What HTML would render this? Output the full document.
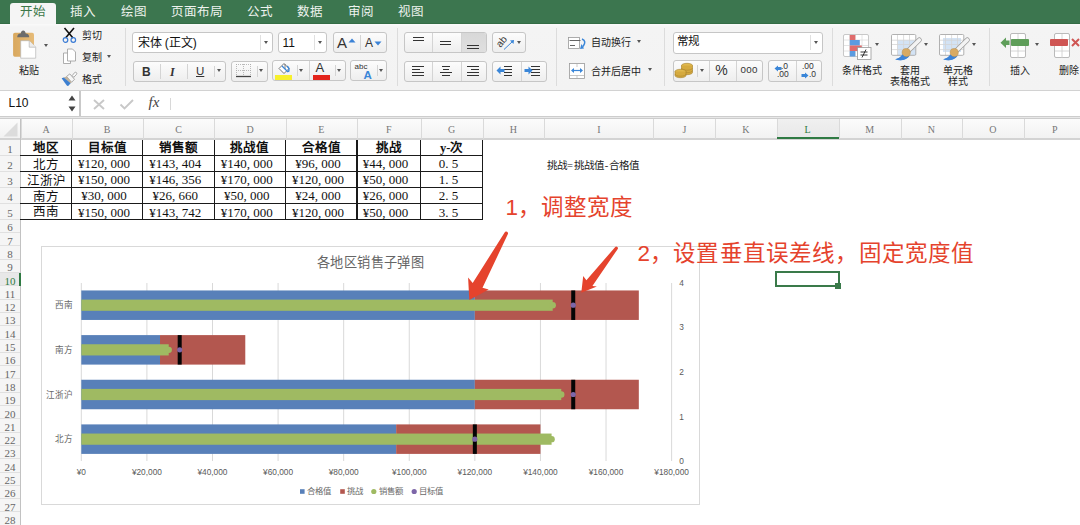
<!DOCTYPE html>
<html lang="zh-CN"><head><meta charset="utf-8">
<style>
*{margin:0;padding:0;box-sizing:border-box}
html,body{width:1080px;height:525px;overflow:hidden;background:#fff;font-family:"Liberation Sans",sans-serif;position:relative}
div,span{position:absolute}
.tab{top:4.5px;font-size:12.5px;line-height:14px;color:#e9efe9;white-space:nowrap;font-weight:500}
.t10{font-size:10px;line-height:11px;color:#222;white-space:nowrap;font-weight:500}
.sep{width:1px;background:#dcdcdc}
.box{border:1px solid #c6c6c6;border-radius:3px;background:linear-gradient(#fcfcfc,#eeeeee)}
.wbox{border:1px solid #c6c6c6;border-radius:3px;background:#fff}
.dv{top:2px;bottom:2px;width:1px;background:#d4d4d4}
.arr{width:0;height:0;border-left:2.6px solid transparent;border-right:2.6px solid transparent;border-top:3.6px solid #5a5a5a}
.ch{top:0;height:19px;font-family:"Liberation Serif",serif;font-size:10px;line-height:19px;text-align:center;color:#666}
.rh{left:0;width:20px;font-family:"Liberation Serif",serif;font-size:11px;text-align:center;color:#666}
.cell{font-family:"Liberation Serif",serif;font-size:13px;text-align:center;color:#111;white-space:nowrap}
.ax{font-size:8px;color:#595959;white-space:nowrap;line-height:9px}
svg{position:absolute}
.ls{position:static;letter-spacing:3.25px}
</style></head><body>
<div style="left:0;top:0;width:1080px;height:24px;background:#3c764f;border-bottom:1px solid #346c45"></div>
<div style="left:9.5px;top:3px;width:46.5px;height:21px;background:#f5f5f5;border-radius:3px 3px 0 0"></div>
<div class="tab" style="left:20px;color:#3b7749">开始</div>
<div class="tab" style="left:70px;color:#eef3ee">插入</div>
<div class="tab" style="left:121px;color:#eef3ee">绘图</div>
<div class="tab" style="left:171px;color:#eef3ee">页面布局</div>
<div class="tab" style="left:247px;color:#eef3ee">公式</div>
<div class="tab" style="left:297px;color:#eef3ee">数据</div>
<div class="tab" style="left:348px;color:#eef3ee">审阅</div>
<div class="tab" style="left:398px;color:#eef3ee">视图</div>
<div style="left:0;top:23.5px;width:1080px;height:67.5px;background:linear-gradient(#fafafa,#f4f4f4 3px,#f3f3f3);border-bottom:1px solid #d2d2d2"></div>
<div class="sep" style="left:125px;top:28px;height:58px"></div>
<div class="sep" style="left:396.5px;top:28px;height:58px"></div>
<div class="sep" style="left:555.6px;top:28px;height:58px"></div>
<div class="sep" style="left:664.4px;top:28px;height:58px"></div>
<div class="sep" style="left:831.5px;top:28px;height:58px"></div>
<div class="sep" style="left:989.3px;top:28px;height:58px"></div>
<svg style="left:10px;top:28px" width="30" height="34" viewBox="0 0 30 34">
<defs><linearGradient id="cbg" x1="0" y1="0" x2="1" y2="0"><stop offset="0" stop-color="#d9a85e"/><stop offset="1" stop-color="#e6bb78"/></linearGradient></defs>
<rect x="3.1" y="4.8" width="20.9" height="24" rx="1.8" fill="url(#cbg)"/>
<path d="M7.2 9.3 q0 -3.5 3.5 -3.8 q0.5 -3 2.5 -3 q2 0 2.5 3 q3.5 0.3 3.5 3.8z" fill="#6c6c6c"/>
<path d="M10.7 12.7 h8.5 l6.5 6.5 v11 h-15z" fill="#fff" stroke="#b5b5b5" stroke-width="0.7"/>
<path d="M19.2 12.7 v6.5 h6.5" fill="#ececec" stroke="#b5b5b5" stroke-width="0.7"/>
</svg>
<div class="arr" style="left:44.4px;top:43.6px;border-top-color:#555"></div>
<div class="t10" style="left:19px;top:64.5px">粘贴</div>
<svg style="left:62px;top:27px" width="15" height="17" viewBox="0 0 15 17">
<path d="M2.5 1 L11 11 M12 1 L3.5 11" stroke="#111" stroke-width="1.6"/>
<circle cx="3.5" cy="13" r="2.3" fill="none" stroke="#3a7bd5" stroke-width="1.2"/>
<circle cx="11.3" cy="13" r="2.3" fill="none" stroke="#3a7bd5" stroke-width="1.2"/>
</svg>
<div class="t10" style="left:82px;top:30px">剪切</div>
<svg style="left:62px;top:48px" width="15" height="17" viewBox="0 0 15 17">
<path d="M1.5 5 h5 l2 2 v8.5 h-7z" fill="#fff" stroke="#9a9a9a" stroke-width="0.8"/>
<path d="M5.5 1 h5 l3 3 v9 h-8z" fill="#fff" stroke="#9a9a9a" stroke-width="0.8"/>
</svg>
<div class="t10" style="left:82px;top:51.5px">复制</div>
<div class="arr" style="left:107.4px;top:55.0px;border-top-color:#555"></div>
<svg style="left:58px;top:68px" width="22" height="20" viewBox="0 0 22 20">
<path d="M14.2 7.6 L16.6 4.6 Q17.6 3.8 18.5 4.7 Q19.2 5.6 18.4 6.5 L15.8 9.3z" fill="#fafafa" stroke="#8a8a8a" stroke-width="0.7"/>
<path d="M8.6 8.4 L11.8 5.9 L16.5 11.3 L13.6 14.3z" fill="#f6f6f6" stroke="#8a8a8a" stroke-width="0.7"/>
<path d="M5.6 9.6 L8.6 8.4 L13.6 14.3 L12.3 15.5z" fill="#c2b39c"/>
<path d="M3.6 10.3 L5.8 9.5 L12.6 15.3 L10.4 17.8 Q9.6 18.4 8.8 17.6z" fill="#3d7fd0"/>
</svg>
<div class="t10" style="left:82px;top:73.5px">格式</div>
<div class="wbox" style="left:132.4px;top:31.7px;width:140.7px;height:21.4px"></div>
<div style="left:259.8px;top:35px;width:1px;height:15px;background:#e0e0e0"></div>
<div class="arr" style="left:263.9px;top:40.7px;border-top-color:#555"></div>
<div style="left:137.5px;top:35.5px;font-size:12px;line-height:14px;color:#111;white-space:nowrap">宋体 (正文)</div>
<div class="wbox" style="left:277.6px;top:31.7px;width:49.8px;height:21.4px"></div>
<div style="left:314.4px;top:35px;width:1px;height:15px;background:#e0e0e0"></div>
<div class="arr" style="left:318.4px;top:40.7px;border-top-color:#555"></div>
<div style="left:282.5px;top:35.5px;font-size:12px;line-height:14px;color:#111">11</div>
<div class="box" style="left:332.6px;top:31.7px;width:54.4px;height:21.4px"><div class="dv" style="left:26.2px"></div></div>
<div style="left:337px;top:33.5px;font-size:15px;line-height:17px;color:#333">A</div>
<svg style="left:348px;top:38px" width="8" height="5"><path d="M0.5 4.5 L4 0.5 L7.5 4.5z" fill="#3b82d6"/></svg>
<div style="left:365px;top:36px;font-size:12px;line-height:14px;color:#333">A</div>
<svg style="left:374px;top:41px" width="8" height="5"><path d="M0.5 0.5 L4 4.5 L7.5 0.5z" fill="#3b82d6"/></svg>
<div class="box" style="left:133.1px;top:60.6px;width:92.6px;height:21.4px"><div class="dv" style="left:26.4px"></div><div class="dv" style="left:53.4px"></div><div class="dv" style="left:80.2px;top:4px;bottom:4px"></div></div>
<div style="left:142px;top:64.5px;font-size:12px;line-height:14px;font-weight:bold;color:#333">B</div>
<div style="left:170px;top:64.5px;font-size:12px;line-height:14px;font-style:italic;font-family:'Liberation Serif',serif;font-weight:bold;color:#333">I</div>
<div style="left:196px;top:64px;font-size:11.5px;line-height:14px;color:#333;text-decoration:underline">U</div>
<div class="arr" style="left:217.4px;top:69.0px;border-top-color:#555"></div>
<div class="box" style="left:230.5px;top:60.6px;width:37px;height:21.4px"><div class="dv" style="left:25.1px;top:4px;bottom:4px"></div></div>
<svg style="left:235px;top:63px" width="18" height="16" viewBox="0 0 18 16">
<path d="M1 1.5 h15 M1 7.5 h15 M1.5 1 v11 M8.5 1 v11 M15.5 1 v11" stroke="#aaa" stroke-width="0.8" stroke-dasharray="1 1"/>
<path d="M1 13.5 h15" stroke="#444" stroke-width="1.3"/></svg>
<div class="arr" style="left:259.4px;top:69.0px;border-top-color:#555"></div>
<div class="box" style="left:272.4px;top:60.4px;width:73.3px;height:21.1px"><div class="dv" style="left:23.5px;top:4px;bottom:4px"></div><div class="dv" style="left:35.2px;top:0;bottom:0"></div><div class="dv" style="left:62.1px;top:4px;bottom:4px"></div></div>
<svg style="left:276px;top:62px" width="16" height="13" viewBox="0 0 16 13">
<path d="M3 6.5 l5 -5 l5 5 l-5 5z" fill="#fff" stroke="#666" stroke-width="0.9"/>
<path d="M9 2 v5" stroke="#666" stroke-width="0.8"/><path d="M11 4 q3 2 1.5 6" stroke="#3a86d8" stroke-width="1.4" fill="none"/>
<path d="M6 4 l6 6" stroke="#3a86d8" stroke-width="1.2"/></svg>
<div style="left:274.8px;top:75.2px;width:17.1px;height:4.5px;background:#f7f02c"></div>
<div class="arr" style="left:299.4px;top:68.6px;border-top-color:#555"></div>
<div style="left:315.5px;top:61px;font-size:13px;line-height:14px;color:#333">A</div>
<div style="left:312.8px;top:75.2px;width:17.1px;height:4.5px;background:#e3241b"></div>
<div class="arr" style="left:337.0px;top:68.6px;border-top-color:#555"></div>
<div class="box" style="left:350.1px;top:60.4px;width:37px;height:21.1px"><div class="dv" style="left:25.9px;top:4px;bottom:4px"></div></div>
<div style="left:354.5px;top:62px;font-size:8px;line-height:9px;color:#333">abc</div>
<div style="left:363.5px;top:69px;font-size:11.5px;line-height:12px;font-weight:bold;color:#3a86d8">A</div>
<div class="arr" style="left:378.8px;top:68.6px;border-top-color:#555"></div>
<div class="box" style="left:404.4px;top:31.7px;width:82.3px;height:21.4px;overflow:hidden"><div style="left:55.2px;top:0;width:27px;height:21px;background:linear-gradient(#d8d8d8,#e0e0e0)"></div><div class="dv" style="left:27px;top:0;bottom:0"></div><div class="dv" style="left:55.2px;top:0;bottom:0"></div></div>
<div style="left:412.6px;top:37px;width:11px;height:1px;background:#333"></div>
<div style="left:412.6px;top:40px;width:11px;height:1px;background:#333"></div>
<div style="left:440px;top:41px;width:11px;height:1px;background:#333"></div>
<div style="left:440px;top:44px;width:11px;height:1px;background:#333"></div>
<div style="left:467.4px;top:45px;width:11.4px;height:1px;background:#333"></div>
<div style="left:467.4px;top:48px;width:11.4px;height:1px;background:#333"></div>
<div class="box" style="left:491.6px;top:31.7px;width:34px;height:21.4px"></div>
<svg style="left:495px;top:33px" width="22" height="19" viewBox="0 0 22 19">
<text x="0" y="0" font-size="10" font-family="Liberation Sans" fill="#333" transform="translate(5.5 15) rotate(-50)">ab</text>
<path d="M9 16.5 L17.5 8.5" stroke="#3a86d8" stroke-width="1"/><path d="M15 7.5 L19 7 L18.5 11z" fill="#3a86d8"/></svg>
<div class="arr" style="left:517.4px;top:40.7px;border-top-color:#555"></div>
<div class="box" style="left:404.4px;top:60.6px;width:82.3px;height:21.1px"><div class="dv" style="left:27px;top:0;bottom:0"></div><div class="dv" style="left:55.2px;top:0;bottom:0"></div></div>
<div style="left:412.2px;top:66px;width:11.5px;height:1px;background:#333"></div>
<div style="left:412.2px;top:69px;width:8px;height:1px;background:#333"></div>
<div style="left:412.2px;top:72px;width:11.5px;height:1px;background:#333"></div>
<div style="left:412.2px;top:75px;width:11.5px;height:1px;background:#333"></div>
<div style="left:441.75px;top:66px;width:8px;height:1px;background:#333"></div>
<div style="left:442.75px;top:69px;width:6px;height:1px;background:#333"></div>
<div style="left:440.0px;top:72px;width:11.5px;height:1px;background:#333"></div>
<div style="left:441.75px;top:75px;width:8px;height:1px;background:#333"></div>
<div style="left:467.2px;top:66px;width:11.5px;height:1px;background:#333"></div>
<div style="left:470.7px;top:69px;width:8px;height:1px;background:#333"></div>
<div style="left:467.2px;top:72px;width:11.5px;height:1px;background:#333"></div>
<div style="left:467.2px;top:75px;width:11.5px;height:1px;background:#333"></div>
<div class="box" style="left:491.6px;top:60.6px;width:55.1px;height:21.1px"><div class="dv" style="left:28px;top:0;bottom:0"></div></div>
<div style="left:503.8px;top:66px;width:8.5px;height:1px;background:#333"></div>
<div style="left:503.8px;top:69px;width:8.5px;height:1px;background:#333"></div>
<div style="left:503.8px;top:72px;width:8.5px;height:1px;background:#333"></div>
<div style="left:503.8px;top:75px;width:8.5px;height:1px;background:#333"></div>
<div style="left:531.2px;top:66px;width:8.5px;height:1px;background:#333"></div>
<div style="left:531.2px;top:69px;width:8.5px;height:1px;background:#333"></div>
<div style="left:531.2px;top:72px;width:8.5px;height:1px;background:#333"></div>
<div style="left:531.2px;top:75px;width:8.5px;height:1px;background:#333"></div>
<svg style="left:496px;top:66px" width="9" height="9"><path d="M0.5 4.5 L4.5 0.5 V3 H8.5 V6 H4.5 V8.5z" fill="#3a86d8"/></svg>
<svg style="left:523.5px;top:66px" width="9" height="9"><path d="M8.5 4.5 L4.5 0.5 V3 H0.5 V6 H4.5 V8.5z" fill="#3a86d8"/></svg>
<svg style="left:568px;top:37px" width="20" height="13" viewBox="0 0 20 13">
<rect x="0.5" y="0.5" width="11" height="11" fill="#fff" stroke="#999" stroke-width="0.8"/>
<path d="M1.5 3.5 h11 M2 8.5 h5" stroke="#666" stroke-width="1"/>
<path d="M14 2 q5 2 1 7.5" stroke="#3a86d8" stroke-width="1.5" fill="none"/><path d="M13.5 7 l2.5 4.5 l-4 0.5z" fill="#3a86d8"/></svg>
<div class="t10" style="left:591.2px;top:37px">自动换行</div>
<div class="arr" style="left:637.2px;top:40.4px;border-top-color:#555"></div>
<svg style="left:569px;top:63px" width="16" height="16" viewBox="0 0 16 16">
<rect x="0.5" y="0.5" width="15" height="15" fill="#fff" stroke="#999" stroke-width="0.8"/>
<path d="M8 1 v3 M8 12 v3 M1 12.5 h14" stroke="#bbb" stroke-width="0.8"/>
<path d="M3 7.5 h10" stroke="#3a86d8" stroke-width="1.2"/><path d="M2 7.5 l3 -2.5 v5z M14 7.5 l-3 -2.5 v5z" fill="#3a86d8"/></svg>
<div class="t10" style="left:591px;top:65.5px">合并后居中</div>
<div class="arr" style="left:647.6px;top:68.4px;border-top-color:#555"></div>
<div class="wbox" style="left:672.6px;top:31.6px;width:150.1px;height:22px"></div>
<div style="left:809.5px;top:35px;width:1px;height:15px;background:#e0e0e0"></div>
<div class="arr" style="left:813.5px;top:40.5px;border-top-color:#555"></div>
<div style="left:677.3px;top:35px;font-size:11.5px;line-height:13px;color:#111">常规</div>
<div class="box" style="left:672.9px;top:60.4px;width:89.7px;height:21.6px"><div class="dv" style="left:23.6px;top:4px;bottom:4px"></div><div class="dv" style="left:35.4px;top:0;bottom:0"></div><div class="dv" style="left:62.6px;top:0;bottom:0"></div></div>
<svg style="left:674px;top:62px" width="20" height="17" viewBox="0 0 20 17">
<ellipse cx="13" cy="3.5" rx="5.5" ry="2.2" fill="#e0b94e" stroke="#a57f2a" stroke-width="0.6"/>
<path d="M7.5 3.5 v7 a5.5 2.2 0 0 0 11 0 v-7" fill="#d5aa3f" stroke="#a57f2a" stroke-width="0.6"/>
<path d="M7.5 6 a5.5 2.2 0 0 0 11 0 M7.5 8.5 a5.5 2.2 0 0 0 11 0" fill="none" stroke="#a57f2a" stroke-width="0.5"/>
<ellipse cx="6.5" cy="9.5" rx="5.5" ry="2.2" fill="#e0b94e" stroke="#a57f2a" stroke-width="0.6"/>
<path d="M1 9.5 v4 a5.5 2.2 0 0 0 11 0 v-4" fill="#d5aa3f" stroke="#a57f2a" stroke-width="0.6"/>
<path d="M1 12 a5.5 2.2 0 0 0 11 0" fill="none" stroke="#a57f2a" stroke-width="0.5"/></svg>
<div class="arr" style="left:699.9px;top:69.0px;border-top-color:#555"></div>
<div style="left:715.3px;top:63px;font-size:14px;line-height:15px;color:#333">%</div>
<div style="left:740.5px;top:64px;font-size:9.8px;line-height:11px;letter-spacing:0.3px;color:#333">000</div>
<div class="box" style="left:767.6px;top:60.4px;width:54.8px;height:21.6px"><div class="dv" style="left:27.7px;top:0;bottom:0"></div></div>
<svg style="left:774px;top:65px" width="8" height="7"><path d="M0.5 3.5 L4 0.5 V2 H7.5 V5 H4 V6.5z" fill="#3a86d8"/></svg>
<div style="left:781px;top:62px;font-size:8.5px;line-height:9px;color:#333">.0</div>
<div style="left:777px;top:70px;font-size:8.5px;line-height:9px;color:#333">.00</div>
<div style="left:802px;top:62px;font-size:8.5px;line-height:9px;color:#333">.00</div>
<svg style="left:801px;top:72px" width="8" height="7"><path d="M7.5 3.5 L4 0.5 V2 H0.5 V5 H4 V6.5z" fill="#3a86d8"/></svg>
<div style="left:809px;top:70px;font-size:8.5px;line-height:9px;color:#333">.0</div>
<svg style="left:843px;top:33.5px" width="27" height="24" viewBox="0 0 27 24">
<rect x="0.5" y="0.5" width="25" height="22" rx="1.5" fill="#fff" stroke="#bbb" stroke-width="0.8"/>
<path d="M6.5 1 v21 M12.5 1 v21 M19 1 v21 M1 6 h24 M1 11.5 h24 M1 17 h24" stroke="#ddd" stroke-width="0.8"/><rect x="6.8" y="1" width="5.5" height="5" fill="#e06c6c"/><rect x="6.8" y="6" width="10" height="5.5" fill="#5b9be0"/>
<rect x="6.8" y="11.5" width="12" height="5.5" fill="#e06c6c"/><rect x="6.8" y="17" width="5.5" height="5.5" fill="#5b9be0"/></svg>
<svg style="left:857px;top:47px" width="15" height="13"><rect x="0.5" y="0.5" width="13.5" height="12" fill="#fff" stroke="#999" stroke-width="0.8"/><path d="M3.5 5 h7 M3.5 8 h7 M9 2.5 L5 10.5" stroke="#222" stroke-width="0.9"/></svg>
<div class="arr" style="left:875.2px;top:43.3px;border-top-color:#555"></div>
<div class="t10" style="left:841.5px;top:65px">条件格式</div>
<svg style="left:891.2px;top:34.2px" width="34" height="28" viewBox="0 0 34 28">
<rect x="0.5" y="0.5" width="24.3" height="20.8" fill="#fff"/><rect x="6.5" y="6.2" width="18.3" height="15.1" fill="#d3e3f5"/>
<path d="M6.5 1 v20.3 M12.6 1 v20.3 M18.5 1 v20.3 M1 6.2 h23.8 M1 10.5 h23.8 M1 15.6 h23.8" stroke="#d4d4d4" stroke-width="0.8" fill="none"/>
<rect x="0.5" y="0.5" width="24.3" height="20.8" rx="1.2" fill="none" stroke="#a8a8a8" stroke-width="0.9"/>
<path d="M28.3 6 L17.8 16.3" stroke="#9a9a9a" stroke-width="5" stroke-linecap="round"/>
<path d="M28.3 6 L17.8 16.3" stroke="#f3f3f3" stroke-width="3.6" stroke-linecap="round"/>
<path d="M11.5 20.5 Q9.5 24 4.2 25.3 Q12.5 28.2 18.4 22.2z" fill="#3d84d8"/><circle cx="15.2" cy="18.6" r="4.1" fill="#d8aa62" stroke="#b48d4c" stroke-width="0.5"/>
<path d="M11.5 20.5 Q9.5 24 4.2 25.3 Q12.5 28.2 18.4 22.2 Q14 24.5 11.5 20.5z" fill="#3d84d8"/>
</svg>
<div class="arr" style="left:923.5px;top:43.3px;border-top-color:#555"></div>
<div class="t10" style="left:899.8px;top:65px">套用</div>
<div class="t10" style="left:890.2px;top:76.2px">表格格式</div>
<svg style="left:939.4px;top:34.2px" width="34" height="28" viewBox="0 0 34 28">
<rect x="0.5" y="0.5" width="24.3" height="20.8" fill="#fff"/><rect x="4" y="4" width="18" height="14" fill="#d3e3f5"/>
<path d="M6.5 1 v20.3 M12.6 1 v20.3 M18.5 1 v20.3 M1 6.2 h23.8 M1 10.5 h23.8 M1 15.6 h23.8" stroke="#d4d4d4" stroke-width="0.8" fill="none"/>
<rect x="0.5" y="0.5" width="24.3" height="20.8" rx="1.2" fill="none" stroke="#a8a8a8" stroke-width="0.9"/>
<path d="M28.3 6 L17.8 16.3" stroke="#9a9a9a" stroke-width="5" stroke-linecap="round"/>
<path d="M28.3 6 L17.8 16.3" stroke="#f3f3f3" stroke-width="3.6" stroke-linecap="round"/>
<path d="M11.5 20.5 Q9.5 24 4.2 25.3 Q12.5 28.2 18.4 22.2z" fill="#3d84d8"/><circle cx="15.2" cy="18.6" r="4.1" fill="#d8aa62" stroke="#b48d4c" stroke-width="0.5"/>
<path d="M11.5 20.5 Q9.5 24 4.2 25.3 Q12.5 28.2 18.4 22.2 Q14 24.5 11.5 20.5z" fill="#3d84d8"/>
</svg>
<div class="arr" style="left:971.6px;top:43.3px;border-top-color:#555"></div>
<div class="t10" style="left:943px;top:65px">单元格</div>
<div class="t10" style="left:948.3px;top:76.2px">样式</div>
<svg style="left:1009.5px;top:33px" width="17" height="26" viewBox="0 0 17 26">
<rect x="0.5" y="0.5" width="15" height="24" rx="1.5" fill="#fff" stroke="#aaa" stroke-width="0.8"/>
<path d="M8 1 v24 M1 6.5 h14 M1 18 h14" stroke="#ccc" stroke-width="0.8"/></svg>
<div style="left:1011px;top:39.3px;width:18px;height:6.7px;background:#5f9e5a;border-radius:1px"></div>
<svg style="left:999.5px;top:37px" width="10" height="12"><path d="M0.5 5.8 L6 0.5 V3.5 H9.5 V8 H6 V11z" fill="#5f9e5a"/></svg>
<div class="arr" style="left:1034.7px;top:42.8px;border-top-color:#555"></div>
<div class="t10" style="left:1009.8px;top:65px">插入</div>
<svg style="left:1053.8px;top:33px" width="17" height="26" viewBox="0 0 17 26">
<rect x="0.5" y="0.5" width="15" height="24" rx="1.5" fill="#fff" stroke="#aaa" stroke-width="0.8"/>
<path d="M8 1 v24 M1 6.5 h14 M1 18 h14" stroke="#ccc" stroke-width="0.8"/></svg>
<div style="left:1050px;top:39.3px;width:18.3px;height:6.7px;background:#cf5654;border-radius:1px"></div>
<svg style="left:1070.5px;top:38px" width="9" height="9"><path d="M1 1 L8 8 M8 1 L1 8" stroke="#cf5654" stroke-width="2"/></svg>
<div class="t10" style="left:1059px;top:65px">删除</div>
<div style="left:0;top:91px;width:1080px;height:26px;background:#fff"></div>
<div style="left:79px;top:91px;width:1.5px;height:25px;background:#c9c9c9"></div>
<div style="left:8.5px;top:96px;font-size:12px;line-height:14px;color:#111">L10</div>
<svg style="left:68px;top:94px" width="8" height="19"><path d="M0.5 6.5 L4 1.5 L7.5 6.5z M0.5 12.5 L4 17.5 L7.5 12.5z" fill="#444"/></svg>
<svg style="left:93px;top:99px" width="12" height="11"><path d="M1 1 L11 10 M11 1 L1 10" stroke="#c8c8c8" stroke-width="1.9"/></svg>
<svg style="left:119px;top:99px" width="15" height="11"><path d="M1.5 5.5 L5.5 9.5 L14 1" stroke="#c8c8c8" stroke-width="1.9" fill="none"/></svg>
<div style="left:148.5px;top:94px;font-family:'Liberation Serif',serif;font-style:italic;font-size:15px;line-height:17px;color:#444">fx</div>
<div style="left:170px;top:97.5px;width:1px;height:12px;background:#d8d8d8"></div>
<div style="left:0;top:116px;width:1080px;height:3px;background:#e8e8e8;border-top:1px solid #cdcdcd;border-bottom:1px solid #cdcdcd"></div>
<div style="left:0;top:118.7px;width:1080px;height:21px;background:linear-gradient(#fbfbfb,#f2f2f2);border-bottom:2px solid #d3d3d3"></div>
<svg style="left:3px;top:122px" width="15" height="15"><path d="M14.5 0.5 V14.5 H0.5z" fill="#dcdcdc"/></svg>
<div style="left:776.5px;top:118.7px;width:62.3px;height:19px;background:linear-gradient(#f0f0f0,#e8e8e8)"></div>
<div style="left:20.7px;top:119px;width:1px;height:20px;background:#dadada"></div>
<div class="ch" style="left:20.7px;top:119.5px;width:51.0px;color:#777">A</div>
<div style="left:71.7px;top:119px;width:1px;height:20px;background:#dadada"></div>
<div class="ch" style="left:71.7px;top:119.5px;width:71.0px;color:#777">B</div>
<div style="left:142.7px;top:119px;width:1px;height:20px;background:#dadada"></div>
<div class="ch" style="left:142.7px;top:119.5px;width:71.6px;color:#777">C</div>
<div style="left:214.3px;top:119px;width:1px;height:20px;background:#dadada"></div>
<div class="ch" style="left:214.3px;top:119.5px;width:71.4px;color:#777">D</div>
<div style="left:285.7px;top:119px;width:1px;height:20px;background:#dadada"></div>
<div class="ch" style="left:285.7px;top:119.5px;width:71.3px;color:#777">E</div>
<div style="left:357.0px;top:119px;width:1px;height:20px;background:#dadada"></div>
<div class="ch" style="left:357.0px;top:119.5px;width:63.7px;color:#777">F</div>
<div style="left:420.7px;top:119px;width:1px;height:20px;background:#dadada"></div>
<div class="ch" style="left:420.7px;top:119.5px;width:62.0px;color:#777">G</div>
<div style="left:482.7px;top:119px;width:1px;height:20px;background:#dadada"></div>
<div class="ch" style="left:482.7px;top:119.5px;width:61.6px;color:#777">H</div>
<div style="left:544.3px;top:119px;width:1px;height:20px;background:#dadada"></div>
<div class="ch" style="left:544.3px;top:119.5px;width:109.0px;color:#777">I</div>
<div style="left:653.3px;top:119px;width:1px;height:20px;background:#dadada"></div>
<div class="ch" style="left:653.3px;top:119.5px;width:62.1px;color:#777">J</div>
<div style="left:715.4px;top:119px;width:1px;height:20px;background:#dadada"></div>
<div class="ch" style="left:715.4px;top:119.5px;width:61.1px;color:#777">K</div>
<div style="left:776.5px;top:119px;width:1px;height:20px;background:#dadada"></div>
<div class="ch" style="left:776.5px;top:119.5px;width:62.3px;color:#2f7a43">L</div>
<div style="left:838.8px;top:119px;width:1px;height:20px;background:#dadada"></div>
<div class="ch" style="left:838.8px;top:119.5px;width:61.9px;color:#777">M</div>
<div style="left:900.7px;top:119px;width:1px;height:20px;background:#dadada"></div>
<div class="ch" style="left:900.7px;top:119.5px;width:61.3px;color:#777">N</div>
<div style="left:962.0px;top:119px;width:1px;height:20px;background:#dadada"></div>
<div class="ch" style="left:962.0px;top:119.5px;width:61.8px;color:#777">O</div>
<div style="left:1023.8px;top:119px;width:1px;height:20px;background:#dadada"></div>
<div class="ch" style="left:1023.8px;top:119.5px;width:61.8px;color:#777">P</div>
<div style="left:776.5px;top:137px;width:62.3px;height:2px;background:#2f7a43"></div>
<div style="left:0;top:139.7px;width:20.1px;height:386px;background:#f5f5f5"></div>
<div style="left:20.1px;top:118.7px;width:1px;height:407px;background:#c2c2c2"></div>
<div class="rh" style="top:141.6px;height:15.7px;line-height:15.7px;color:#666">1</div>
<div style="left:0;top:154.8px;width:20px;height:1px;background:#e0e0e0"></div>
<div class="rh" style="top:157.3px;height:16.1px;line-height:16.1px;color:#666">2</div>
<div style="left:0;top:170.9px;width:20px;height:1px;background:#e0e0e0"></div>
<div class="rh" style="top:173.4px;height:16.0px;line-height:16.0px;color:#666">3</div>
<div style="left:0;top:186.9px;width:20px;height:1px;background:#e0e0e0"></div>
<div class="rh" style="top:189.4px;height:16.2px;line-height:16.2px;color:#666">4</div>
<div style="left:0;top:203.1px;width:20px;height:1px;background:#e0e0e0"></div>
<div class="rh" style="top:205.6px;height:15.7px;line-height:15.7px;color:#666">5</div>
<div style="left:0;top:218.8px;width:20px;height:1px;background:#e0e0e0"></div>
<div class="rh" style="top:221.3px;height:13.3px;line-height:13.3px;color:#666">6</div>
<div style="left:0;top:232.1px;width:20px;height:1px;background:#e0e0e0"></div>
<div class="rh" style="top:234.6px;height:13.3px;line-height:13.3px;color:#666">7</div>
<div style="left:0;top:245.4px;width:20px;height:1px;background:#e0e0e0"></div>
<div class="rh" style="top:247.9px;height:13.3px;line-height:13.3px;color:#666">8</div>
<div style="left:0;top:258.7px;width:20px;height:1px;background:#e0e0e0"></div>
<div class="rh" style="top:261.2px;height:13.3px;line-height:13.3px;color:#666">9</div>
<div style="left:0;top:272.0px;width:20px;height:1px;background:#e0e0e0"></div>
<div style="left:0;top:272.5px;width:20.1px;height:13.3px;background:#e8e8e8"></div>
<div class="rh" style="top:274.5px;height:13.3px;line-height:13.3px;color:#2f7a43">10</div>
<div style="left:0;top:285.3px;width:20px;height:1px;background:#e0e0e0"></div>
<div class="rh" style="top:287.8px;height:13.3px;line-height:13.3px;color:#666">11</div>
<div style="left:0;top:298.6px;width:20px;height:1px;background:#e0e0e0"></div>
<div class="rh" style="top:301.1px;height:13.3px;line-height:13.3px;color:#666">12</div>
<div style="left:0;top:311.9px;width:20px;height:1px;background:#e0e0e0"></div>
<div class="rh" style="top:314.4px;height:13.3px;line-height:13.3px;color:#666">13</div>
<div style="left:0;top:325.2px;width:20px;height:1px;background:#e0e0e0"></div>
<div class="rh" style="top:327.7px;height:13.3px;line-height:13.3px;color:#666">14</div>
<div style="left:0;top:338.5px;width:20px;height:1px;background:#e0e0e0"></div>
<div class="rh" style="top:341.0px;height:13.3px;line-height:13.3px;color:#666">15</div>
<div style="left:0;top:351.8px;width:20px;height:1px;background:#e0e0e0"></div>
<div class="rh" style="top:354.3px;height:13.3px;line-height:13.3px;color:#666">16</div>
<div style="left:0;top:365.1px;width:20px;height:1px;background:#e0e0e0"></div>
<div class="rh" style="top:367.6px;height:13.3px;line-height:13.3px;color:#666">17</div>
<div style="left:0;top:378.4px;width:20px;height:1px;background:#e0e0e0"></div>
<div class="rh" style="top:380.9px;height:13.3px;line-height:13.3px;color:#666">18</div>
<div style="left:0;top:391.7px;width:20px;height:1px;background:#e0e0e0"></div>
<div class="rh" style="top:394.2px;height:13.3px;line-height:13.3px;color:#666">19</div>
<div style="left:0;top:405.0px;width:20px;height:1px;background:#e0e0e0"></div>
<div class="rh" style="top:407.5px;height:13.3px;line-height:13.3px;color:#666">20</div>
<div style="left:0;top:418.3px;width:20px;height:1px;background:#e0e0e0"></div>
<div class="rh" style="top:420.8px;height:13.3px;line-height:13.3px;color:#666">21</div>
<div style="left:0;top:431.6px;width:20px;height:1px;background:#e0e0e0"></div>
<div class="rh" style="top:434.1px;height:13.3px;line-height:13.3px;color:#666">22</div>
<div style="left:0;top:444.9px;width:20px;height:1px;background:#e0e0e0"></div>
<div class="rh" style="top:447.4px;height:13.3px;line-height:13.3px;color:#666">23</div>
<div style="left:0;top:458.2px;width:20px;height:1px;background:#e0e0e0"></div>
<div class="rh" style="top:460.7px;height:13.3px;line-height:13.3px;color:#666">24</div>
<div style="left:0;top:471.5px;width:20px;height:1px;background:#e0e0e0"></div>
<div class="rh" style="top:474.0px;height:13.3px;line-height:13.3px;color:#666">25</div>
<div style="left:0;top:484.8px;width:20px;height:1px;background:#e0e0e0"></div>
<div class="rh" style="top:487.3px;height:13.3px;line-height:13.3px;color:#666">26</div>
<div style="left:0;top:498.1px;width:20px;height:1px;background:#e0e0e0"></div>
<div class="rh" style="top:500.6px;height:13.3px;line-height:13.3px;color:#666">27</div>
<div style="left:0;top:511.4px;width:20px;height:1px;background:#e0e0e0"></div>
<div class="rh" style="top:513.9px;height:13.3px;line-height:13.3px;color:#666">28</div>
<div style="left:0;top:524.7px;width:20px;height:1px;background:#e0e0e0"></div>
<div style="left:18.8px;top:272.5px;width:2px;height:13.3px;background:#2f7a43"></div>
<div class="cell" style="left:20.7px;top:141.4px;width:51.0px;height:15.7px;line-height:15.7px;font-weight:bold;font-size:12.5px;">地区</div>
<div class="cell" style="left:71.7px;top:141.4px;width:71.0px;height:15.7px;line-height:15.7px;font-weight:bold;font-size:12.5px;">目标值</div>
<div class="cell" style="left:142.7px;top:141.4px;width:71.6px;height:15.7px;line-height:15.7px;font-weight:bold;font-size:12.5px;">销售额</div>
<div class="cell" style="left:214.3px;top:141.4px;width:71.4px;height:15.7px;line-height:15.7px;font-weight:bold;font-size:12.5px;">挑战值</div>
<div class="cell" style="left:285.7px;top:141.4px;width:71.3px;height:15.7px;line-height:15.7px;font-weight:bold;font-size:12.5px;">合格值</div>
<div class="cell" style="left:357.0px;top:141.4px;width:63.7px;height:15.7px;line-height:15.7px;font-weight:bold;font-size:12.5px;">挑战</div>
<div class="cell" style="left:420.7px;top:141.4px;width:62.0px;height:15.7px;line-height:15.7px;font-weight:bold;font-size:12.5px;">y-次</div>
<div class="cell" style="left:20.7px;top:157.1px;width:51.0px;height:16.1px;line-height:16.1px;font-size:12.5px;">北方</div>
<div class="cell" style="left:71.7px;top:156.3px;width:71.0px;height:16.1px;line-height:16.1px;padding-right:6.5px;">¥120<span class="ls">,</span>000</div>
<div class="cell" style="left:142.7px;top:156.3px;width:71.6px;height:16.1px;line-height:16.1px;padding-right:6.5px;">¥143<span class="ls">,</span>404</div>
<div class="cell" style="left:214.3px;top:156.3px;width:71.4px;height:16.1px;line-height:16.1px;padding-right:6.5px;">¥140<span class="ls">,</span>000</div>
<div class="cell" style="left:285.7px;top:156.3px;width:71.3px;height:16.1px;line-height:16.1px;padding-right:6.5px;">¥96<span class="ls">,</span>000</div>
<div class="cell" style="left:357.0px;top:156.3px;width:63.7px;height:16.1px;line-height:16.1px;padding-right:6.5px;">¥44<span class="ls">,</span>000</div>
<div class="cell" style="left:420.7px;top:156.3px;width:62.0px;height:16.1px;line-height:16.1px;padding-right:6.5px;">0<span class="ls">.</span>5</div>
<div class="cell" style="left:20.7px;top:173.2px;width:51.0px;height:16.0px;line-height:16.0px;font-size:12.5px;">江浙沪</div>
<div class="cell" style="left:71.7px;top:172.4px;width:71.0px;height:16.0px;line-height:16.0px;padding-right:6.5px;">¥150<span class="ls">,</span>000</div>
<div class="cell" style="left:142.7px;top:172.4px;width:71.6px;height:16.0px;line-height:16.0px;padding-right:6.5px;">¥146<span class="ls">,</span>356</div>
<div class="cell" style="left:214.3px;top:172.4px;width:71.4px;height:16.0px;line-height:16.0px;padding-right:6.5px;">¥170<span class="ls">,</span>000</div>
<div class="cell" style="left:285.7px;top:172.4px;width:71.3px;height:16.0px;line-height:16.0px;padding-right:6.5px;">¥120<span class="ls">,</span>000</div>
<div class="cell" style="left:357.0px;top:172.4px;width:63.7px;height:16.0px;line-height:16.0px;padding-right:6.5px;">¥50<span class="ls">,</span>000</div>
<div class="cell" style="left:420.7px;top:172.4px;width:62.0px;height:16.0px;line-height:16.0px;padding-right:6.5px;">1<span class="ls">.</span>5</div>
<div class="cell" style="left:20.7px;top:189.2px;width:51.0px;height:16.2px;line-height:16.2px;font-size:12.5px;">南方</div>
<div class="cell" style="left:71.7px;top:188.4px;width:71.0px;height:16.2px;line-height:16.2px;padding-right:6.5px;">¥30<span class="ls">,</span>000</div>
<div class="cell" style="left:142.7px;top:188.4px;width:71.6px;height:16.2px;line-height:16.2px;padding-right:6.5px;">¥26<span class="ls">,</span>660</div>
<div class="cell" style="left:214.3px;top:188.4px;width:71.4px;height:16.2px;line-height:16.2px;padding-right:6.5px;">¥50<span class="ls">,</span>000</div>
<div class="cell" style="left:285.7px;top:188.4px;width:71.3px;height:16.2px;line-height:16.2px;padding-right:6.5px;">¥24<span class="ls">,</span>000</div>
<div class="cell" style="left:357.0px;top:188.4px;width:63.7px;height:16.2px;line-height:16.2px;padding-right:6.5px;">¥26<span class="ls">,</span>000</div>
<div class="cell" style="left:420.7px;top:188.4px;width:62.0px;height:16.2px;line-height:16.2px;padding-right:6.5px;">2<span class="ls">.</span>5</div>
<div class="cell" style="left:20.7px;top:205.4px;width:51.0px;height:15.7px;line-height:15.7px;font-size:12.5px;">西南</div>
<div class="cell" style="left:71.7px;top:204.6px;width:71.0px;height:15.7px;line-height:15.7px;padding-right:6.5px;">¥150<span class="ls">,</span>000</div>
<div class="cell" style="left:142.7px;top:204.6px;width:71.6px;height:15.7px;line-height:15.7px;padding-right:6.5px;">¥143<span class="ls">,</span>742</div>
<div class="cell" style="left:214.3px;top:204.6px;width:71.4px;height:15.7px;line-height:15.7px;padding-right:6.5px;">¥170<span class="ls">,</span>000</div>
<div class="cell" style="left:285.7px;top:204.6px;width:71.3px;height:15.7px;line-height:15.7px;padding-right:6.5px;">¥120<span class="ls">,</span>000</div>
<div class="cell" style="left:357.0px;top:204.6px;width:63.7px;height:15.7px;line-height:15.7px;padding-right:6.5px;">¥50<span class="ls">,</span>000</div>
<div class="cell" style="left:420.7px;top:204.6px;width:62.0px;height:15.7px;line-height:15.7px;padding-right:6.5px;">3<span class="ls">.</span>5</div>
<div style="left:20.2px;top:154.6px;width:463.0px;height:1.4px;background:#1a1a1a"></div>
<div style="left:20.2px;top:170.7px;width:463.0px;height:1.4px;background:#1a1a1a"></div>
<div style="left:20.2px;top:186.7px;width:463.0px;height:1.4px;background:#1a1a1a"></div>
<div style="left:20.2px;top:202.9px;width:463.0px;height:1.4px;background:#1a1a1a"></div>
<div style="left:20.2px;top:218.6px;width:463.0px;height:1.4px;background:#1a1a1a"></div>
<div style="left:71.0px;top:139.6px;width:1.4px;height:79.7px;background:#1a1a1a"></div>
<div style="left:142.0px;top:139.6px;width:1.4px;height:79.7px;background:#1a1a1a"></div>
<div style="left:213.6px;top:139.6px;width:1.4px;height:79.7px;background:#1a1a1a"></div>
<div style="left:285.0px;top:139.6px;width:1.4px;height:79.7px;background:#1a1a1a"></div>
<div style="left:356.3px;top:139.6px;width:1.4px;height:79.7px;background:#1a1a1a"></div>
<div style="left:420.0px;top:139.6px;width:1.4px;height:79.7px;background:#1a1a1a"></div>
<div style="left:482.0px;top:139.6px;width:1.4px;height:79.7px;background:#1a1a1a"></div>
<div style="left:546.5px;top:159.5px;font-size:10.5px;line-height:12px;color:#222;font-family:'Liberation Serif',serif;white-space:nowrap">挑战<span class="ls" style="letter-spacing:0;padding:0 0.6px">=</span>挑战值<span class="ls" style="letter-spacing:0;padding:0 1.2px">-</span>合格值</div>
<div style="left:775.3px;top:271.4px;width:64.5px;height:15.8px;border:2px solid #3a7a4a"></div>
<div style="left:835.3px;top:283.3px;width:5.8px;height:5.3px;background:#3a7a4a;"></div>
<div style="left:41.4px;top:246.4px;width:658.6px;height:258.8px;border:1px solid #d9d9d9;background:#fff"></div>
<div style="left:317px;top:254.5px;font-family:'Liberation Serif',serif;font-size:13.2px;line-height:15px;letter-spacing:0.4px;color:#666;white-space:nowrap">各地区销售子弹图</div>
<svg style="left:0;top:0" width="1080" height="525" viewBox="0 0 1080 525"><rect x="80.80" y="283" width="1" height="178" fill="#d9d9d9"/><rect x="146.39" y="283" width="1" height="178" fill="#d9d9d9"/><rect x="211.98" y="283" width="1" height="178" fill="#d9d9d9"/><rect x="277.57" y="283" width="1" height="178" fill="#d9d9d9"/><rect x="343.16" y="283" width="1" height="178" fill="#d9d9d9"/><rect x="408.75" y="283" width="1" height="178" fill="#d9d9d9"/><rect x="474.34" y="283" width="1" height="178" fill="#d9d9d9"/><rect x="539.93" y="283" width="1" height="178" fill="#d9d9d9"/><rect x="605.52" y="283" width="1" height="178" fill="#d9d9d9"/><rect x="671.11" y="283" width="1" height="178" fill="#d9d9d9"/><rect x="81.30" y="424.40" width="314.83" height="29.5" fill="#5880b9"/><rect x="396.13" y="424.40" width="144.30" height="29.5" fill="#b3574f"/><rect x="81.30" y="433.55" width="470.29" height="11.2" fill="#9fba62"/><circle cx="551.59" cy="439.15" r="3.2" fill="#9fba62"/><rect x="472.84" y="424.40" width="4" height="29.5" fill="#050505"/><circle cx="474.84" cy="439.15" r="2.6" fill="#7d66a8"/><text x="73.0" y="442.15" text-anchor="end" font-size="8.6" fill="#6a6a6a" font-family="Liberation Serif, serif">北方</text><rect x="81.30" y="379.75" width="393.54" height="29.5" fill="#5880b9"/><rect x="474.84" y="379.75" width="163.98" height="29.5" fill="#b3574f"/><rect x="81.30" y="388.90" width="479.97" height="11.2" fill="#9fba62"/><circle cx="561.27" cy="394.50" r="3.2" fill="#9fba62"/><rect x="571.23" y="379.75" width="4" height="29.5" fill="#050505"/><circle cx="573.23" cy="394.50" r="2.6" fill="#7d66a8"/><text x="73.0" y="397.50" text-anchor="end" font-size="8.6" fill="#6a6a6a" font-family="Liberation Serif, serif">江浙沪</text><rect x="81.30" y="335.10" width="78.71" height="29.5" fill="#5880b9"/><rect x="160.01" y="335.10" width="85.27" height="29.5" fill="#b3574f"/><rect x="81.30" y="344.25" width="87.43" height="11.2" fill="#9fba62"/><circle cx="168.73" cy="349.85" r="3.2" fill="#9fba62"/><rect x="177.69" y="335.10" width="4" height="29.5" fill="#050505"/><circle cx="179.69" cy="349.85" r="2.6" fill="#7d66a8"/><text x="73.0" y="352.85" text-anchor="end" font-size="8.6" fill="#6a6a6a" font-family="Liberation Serif, serif">南方</text><rect x="81.30" y="290.45" width="393.54" height="29.5" fill="#5880b9"/><rect x="474.84" y="290.45" width="163.98" height="29.5" fill="#b3574f"/><rect x="81.30" y="299.60" width="471.40" height="11.2" fill="#9fba62"/><circle cx="552.70" cy="305.20" r="3.2" fill="#9fba62"/><rect x="571.23" y="290.45" width="4" height="29.5" fill="#050505"/><circle cx="573.23" cy="305.20" r="2.6" fill="#7d66a8"/><text x="73.0" y="308.20" text-anchor="end" font-size="8.6" fill="#6a6a6a" font-family="Liberation Serif, serif">西南</text><text x="81.30" y="475.3" text-anchor="middle" font-size="8.3" fill="#595959" font-family="Liberation Sans, sans-serif">¥0</text><text x="146.89" y="475.3" text-anchor="middle" font-size="8.3" fill="#595959" font-family="Liberation Sans, sans-serif">¥20,000</text><text x="212.48" y="475.3" text-anchor="middle" font-size="8.3" fill="#595959" font-family="Liberation Sans, sans-serif">¥40,000</text><text x="278.07" y="475.3" text-anchor="middle" font-size="8.3" fill="#595959" font-family="Liberation Sans, sans-serif">¥60,000</text><text x="343.66" y="475.3" text-anchor="middle" font-size="8.3" fill="#595959" font-family="Liberation Sans, sans-serif">¥80,000</text><text x="409.25" y="475.3" text-anchor="middle" font-size="8.3" fill="#595959" font-family="Liberation Sans, sans-serif">¥100,000</text><text x="474.84" y="475.3" text-anchor="middle" font-size="8.3" fill="#595959" font-family="Liberation Sans, sans-serif">¥120,000</text><text x="540.43" y="475.3" text-anchor="middle" font-size="8.3" fill="#595959" font-family="Liberation Sans, sans-serif">¥140,000</text><text x="606.02" y="475.3" text-anchor="middle" font-size="8.3" fill="#595959" font-family="Liberation Sans, sans-serif">¥160,000</text><text x="671.61" y="475.3" text-anchor="middle" font-size="8.3" fill="#595959" font-family="Liberation Sans, sans-serif">¥180,000</text><text x="681.5" y="464.20" text-anchor="middle" font-size="8.3" fill="#595959" font-family="Liberation Sans, sans-serif">0</text><text x="681.5" y="419.60" text-anchor="middle" font-size="8.3" fill="#595959" font-family="Liberation Sans, sans-serif">1</text><text x="681.5" y="375.00" text-anchor="middle" font-size="8.3" fill="#595959" font-family="Liberation Sans, sans-serif">2</text><text x="681.5" y="330.40" text-anchor="middle" font-size="8.3" fill="#595959" font-family="Liberation Sans, sans-serif">3</text><text x="681.5" y="285.80" text-anchor="middle" font-size="8.3" fill="#595959" font-family="Liberation Sans, sans-serif">4</text><rect x="300" y="489.2" width="4.6" height="4.6" fill="#5880b9"/><rect x="340.2" y="489.2" width="4.6" height="4.6" fill="#b3574f"/><circle cx="373.8" cy="491.5" r="2.6" fill="#9fba62"/><circle cx="414.2" cy="491.5" r="2.6" fill="#7d66a8"/><text x="306.5" y="493.8" font-size="8.4" fill="#6a6a6a" font-family="Liberation Serif, serif">合格值</text><text x="347" y="493.8" font-size="8.4" fill="#6a6a6a" font-family="Liberation Serif, serif">挑战</text><text x="378.5" y="493.8" font-size="8.4" fill="#6a6a6a" font-family="Liberation Serif, serif">销售额</text><text x="419" y="493.8" font-size="8.4" fill="#6a6a6a" font-family="Liberation Serif, serif">目标值</text></svg>
<div style="left:505.5px;top:195px;font-size:22.5px;line-height:26px;color:#e5432d;white-space:nowrap">1，调整宽度</div>
<div style="left:637.5px;top:240.5px;font-size:22.5px;line-height:26px;letter-spacing:0.15px;color:#e5432d;white-space:nowrap">2，设置垂直误差线，固定宽度值</div>
<svg style="left:0;top:0" width="1080" height="525"><path d="M504.62 232.53 L472.70 283.00 L468.10 277.60 L469.30 300.10 L488.70 289.60 L482.50 287.80 L507.78 234.27 A1.80 1.80 0 0 0 504.62 232.53 Z" fill="#e5432d"/><path d="M615.04 247.21 L586.40 280.20 L583.20 276.00 L581.30 292.70 L596.90 286.60 L592.40 285.90 L617.56 249.19 A1.60 1.60 0 0 0 615.04 247.21 Z" fill="#e5432d"/></svg>
</body></html>
